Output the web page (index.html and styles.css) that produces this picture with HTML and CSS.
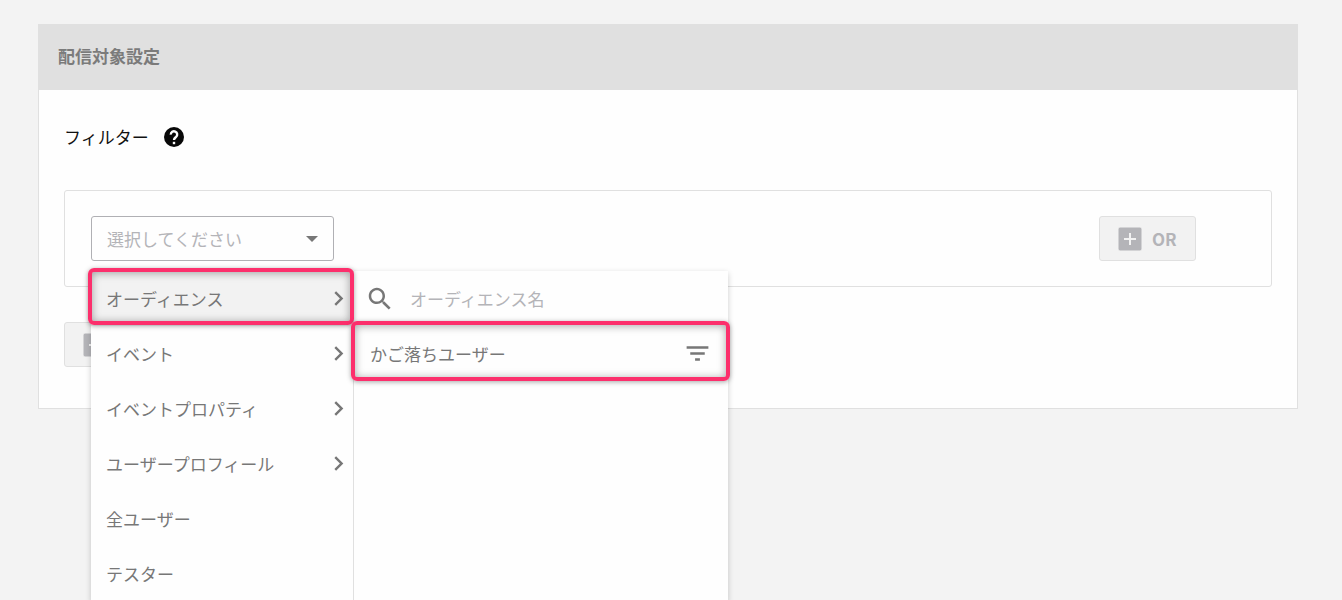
FILE: index.html
```html
<!DOCTYPE html>
<html lang="ja">
<head>
  <meta charset="UTF-8">
  <meta name="viewport" content="width=device-width, initial-scale=1">
  <title>配信対象設定</title>
  <link rel="stylesheet" href="styles.css">
</head>
<body>

  <main class="card">
    <h1 class="card-header">配信対象設定</h1>

    <div class="card-body">
      <div class="filter-title">
        <label for="filter-type">フィルター</label>
        <svg class="help" viewBox="0 0 24 24" aria-hidden="true"><circle cx="12" cy="12" r="10"/><path d="M8.800 9.600a3.200 3.200 0 1 1 5.300 2.300C12.900 12.900 12 13.400 12 15"/><path d="M12 16.800v2.400"/></svg>
      </div>

      <div class="filter-group">
        <div class="picker">
          <select id="filter-type" class="select">
            <option>選択してください</option>
          </select>
          <svg class="caret" viewBox="0 0 24 24" aria-hidden="true"><path d="M6 9h12l-6 6z"/></svg>

          <!-- Dropdown menu -->
          <div class="menu">
            <div class="menu-list">
              <button class="menu-item active marked">オーディエンス
                <svg viewBox="0 0 24 24" aria-hidden="true"><path d="M10 6L8.590 7.410 13.170 12l-4.580 4.590L10 18l6-6z"/></svg>
              </button>
              <button class="menu-item">イベント
                <svg viewBox="0 0 24 24" aria-hidden="true"><path d="M10 6L8.590 7.410 13.170 12l-4.580 4.590L10 18l6-6z"/></svg>
              </button>
              <button class="menu-item">イベントプロパティ
                <svg viewBox="0 0 24 24" aria-hidden="true"><path d="M10 6L8.590 7.410 13.170 12l-4.580 4.590L10 18l6-6z"/></svg>
              </button>
              <button class="menu-item">ユーザープロフィール
                <svg viewBox="0 0 24 24" aria-hidden="true"><path d="M10 6L8.590 7.410 13.170 12l-4.580 4.590L10 18l6-6z"/></svg>
              </button>
              <button class="menu-item">全ユーザー</button>
              <button class="menu-item">テスター</button>
            </div>

            <div class="submenu">
              <div class="search">
                <label for="audience-name">
                  <svg viewBox="0 0 24 24" aria-hidden="true"><path d="M15.500 14h-.790l-.280-.270C15.410 12.590 16 11.110 16 9.500 16 5.910 13.090 3 9.500 3S3 5.910 3 9.500 5.910 16 9.500 16c1.610 0 3.090-.590 4.230-1.570l.270.280v.790l5 4.990L20.490 19l-4.990-5zm-6 0C7.010 14 5 11.990 5 9.500S7.010 5 9.500 5 14 7.010 14 9.500 11.990 14 9.500 14z"/></svg>
                </label>
                <input id="audience-name" type="text" placeholder="オーディエンス名" aria-label="オーディエンス名">
              </div>
              <button class="menu-item audience marked">かご落ちユーザー
                <svg viewBox="0 0 24 24" aria-hidden="true"><path d="M10 18h4v-2h-4v2zM3 6v2h18V6H3zm3 7h12v-2H6v2z"/></svg>
              </button>
            </div>
          </div>
        </div>

        <button class="add-button" disabled>
          <svg viewBox="0 0 24 24" aria-hidden="true"><rect width="24" height="24" rx="2"/><path d="M12 6v12M6 12h12"/></svg>
          OR
        </button>
      </div>

      <button class="add-button" aria-label="追加" disabled>
        <svg viewBox="0 0 24 24" aria-hidden="true"><rect width="24" height="24" rx="2"/><path d="M12 6v12M6 12h12"/></svg>
      </button>
    </div>
  </main>

</body>
</html>
```

FILE: styles.css
```css
* {
  box-sizing: border-box;
}

body {
  margin: 0;
  padding: 24px 44px 24px 38px;
  height: 100vh;
  overflow: hidden;
  background: #f3f3f3;
  color: #111;
  font-family: "Noto Sans CJK JP", sans-serif;
  font-size: 17px;
  line-height: 24px;
}

button, input, select {
  font: inherit;
}

.card {
  background: #fefefe;
  border: 1px solid #e0e0e0;
}

.card-header {
  margin: -1px -1px 0;
  padding: 20px 20px 22px;
  background: #e0e0e0;
  color: #7b7b7b;
  font-size: 17px;
  font-weight: bold;
  line-height: 24px;
}

.card-body {
  padding: 35px 25px 41px;
}

.filter-title {
  display: flex;
  align-items: center;
  gap: 13px;
}

.help {
  width: 24px;
  height: 24px;
  fill: #080808;
}

.help path {
  fill: none;
  stroke: #fefefe;
  stroke-width: 2.4;
}

.filter-group {
  display: flex;
  justify-content: space-between;
  margin: 41px 0 35px;
  padding: 25px 75px 25px 26px;
  border: 1px solid #e0e0e0;
  border-radius: 3px;
}

.picker {
  position: relative;
}

.select {
  display: block;
  width: 243px;
  height: 45px;
  padding: 0 40px 0 15px;
  appearance: none;
  background: #fefefe;
  border: 1px solid #b0b0b4;
  border-radius: 3px;
  color: #b4b4b8;
}

.caret {
  position: absolute;
  top: 11px;
  right: 10px;
  width: 24px;
  height: 24px;
  fill: #777;
  pointer-events: none;
}

.add-button {
  display: flex;
  align-items: center;
  gap: 10px;
  min-width: 97px;
  height: 45px;
  padding: 0 18px;
  background: #f2f2f2;
  border: 1px solid #e0e0e0;
  border-radius: 3px;
  color: #b4b4b8;
  font-weight: bold;
}

.add-button svg {
  width: 24px;
  height: 24px;
  fill: #b4b4b8;
  stroke: #f2f2f2;
  stroke-width: 2;
}

.add-button rect {
  stroke-width: 1;
}

/* Menu */
.menu {
  position: absolute;
  top: 55px;
  left: 0;
  z-index: 1;
  display: flex;
  background: #fefefe;
  box-shadow: 0 2px 6px rgba(0, 0, 0, 0.2);
}

.menu-list {
  width: 263px;
  border-right: 1px solid #e0e0e0;
}

.submenu {
  width: 374px;
}

.menu-item {
  position: relative;
  display: flex;
  align-items: center;
  justify-content: space-between;
  width: 100%;
  height: 55px;
  padding: 0 0 0 15px;
  background: none;
  border: none;
  color: #777;
  text-align: left;
}

.menu-item svg {
  width: 29px;
  height: 29px;
  fill: #777;
}

.active {
  background: #f2f2f2;
}

/* Red frame around the entries to click */
.marked::after {
  content: "";
  position: absolute;
  z-index: 2;
  inset: -3px -1px 1px -3px;
  border: 4px solid #fc2f6c;
  border-radius: 6px;
  box-shadow: 0 1px 5px rgba(0, 0, 0, 0.35), inset 0 1px 9px rgba(0, 0, 0, 0.35);
}

.audience {
  padding: 0 16px;
}

.audience.marked::after {
  inset: -5px -2px 0 -3px;
}

.search {
  display: flex;
  align-items: center;
  gap: 15px;
  height: 55px;
  padding: 0 16px 0 11px;
}

.search label {
  display: flex;
}

.search svg {
  width: 30px;
  height: 30px;
  fill: #777;
}

.search input {
  flex: 1;
  min-width: 0;
  padding: 0;
  background: none;
  border: none;
  outline: none;
}

.search input::placeholder {
  color: #b4b4b8;
}
```
